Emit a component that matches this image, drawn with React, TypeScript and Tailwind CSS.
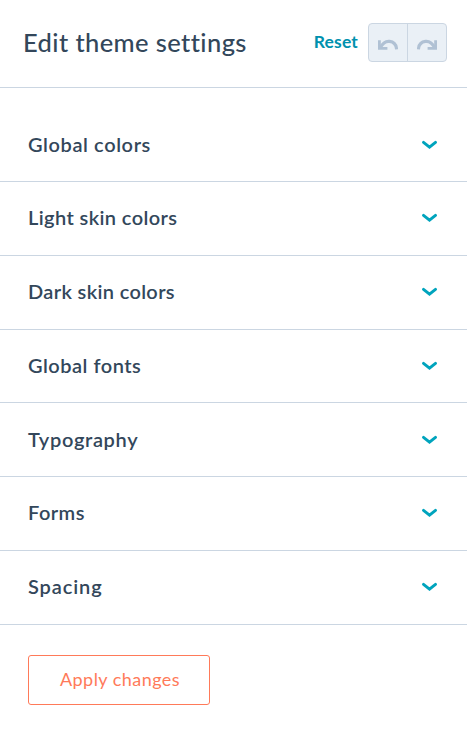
import React from 'react';

interface Section {
  title: string;
  tracking: string;
}

const sections: Section[] = [
  { title: 'Global colors', tracking: 'tracking-[0.6px]' },
  { title: 'Light skin colors', tracking: 'tracking-[0.4px]' },
  { title: 'Dark skin colors', tracking: 'tracking-[0.35px]' },
  { title: 'Global fonts', tracking: 'tracking-[0.5px]' },
  { title: 'Typography', tracking: 'tracking-[0.65px]' },
  { title: 'Forms', tracking: 'tracking-[0.45px]' },
  { title: 'Spacing', tracking: 'tracking-[0.9px]' },
];

function ChevronIcon() {
  return (
    <svg className="w-4 h-[10px]" viewBox="0 0 16 10" fill="none">
      <path d="M2.5 2.3L8.5 7.2L14.5 2.3" stroke="#00a4bd" strokeWidth="2.9" strokeLinecap="round" />
    </svg>
  );
}

function UndoIcon() {
  return (
    <svg className="w-5 h-3" viewBox="0 0 20 12" fill="none" stroke="#b0c1d4" strokeWidth="2.8">
      <path d="M1.4 1.2V9.4H9.4" />
      <path d="M2.2 9C4.5 4.2 8 2 11.6 2.4C15.6 2.8 18.2 5.6 18.6 10.3" strokeWidth="3.1" />
    </svg>
  );
}

function AccordionRow({ title, tracking }: Section) {
  return (
    <button className="flex w-full h-[73.75px] items-center justify-between border-b border-[#cbd6e2] pl-7 pr-[30px]">
      <span className={`pb-[2px] text-[20px] leading-6 font-semibold ${tracking}`}>{title}</span>
      <ChevronIcon />
    </button>
  );
}

export default function App() {
  return (
    <div className="min-h-[734px] w-full bg-white text-[#33475b] font-['Lato',sans-serif]">
      <header className="flex h-[88px] items-center border-b border-[#cbd6e2] pl-[23px] pr-5 pb-[2px]">
        <h1 className="flex-1 whitespace-nowrap pb-[2px] text-[25.5px] leading-8 font-medium tracking-[0.4px]">Edit theme settings</h1>
        <button className="mr-[10px] pb-[2px] text-[17.5px] leading-6 font-bold tracking-[0.15px] text-[#0091ae]">Reset</button>
        <div className="flex h-[39px] w-[79px] overflow-hidden rounded-[4px] border border-[#cbd6e2] bg-[#eaf0f6]">
          <button aria-label="Undo" className="flex w-[39px] items-center justify-center border-r border-[#cbd6e2] pt-1">
            <UndoIcon />
          </button>
          <button aria-label="Redo" className="flex flex-1 items-center justify-center pt-1">
            <span className="-scale-x-100">
              <UndoIcon />
            </span>
          </button>
        </div>
      </header>

      <main className="pt-[20.25px]">
        {sections.map((section) => (
          <AccordionRow key={section.title} {...section} />
        ))}
      </main>

      <div className="px-7 pt-[30.5px]">
        <button className="h-[50px] w-[182px] rounded-[3px] border border-[#ff7a59] pb-[2px] pl-[2px] text-[18px] text-[#ff7a59] tracking-[0.45px]">
          Apply changes
        </button>
      </div>
    </div>
  );
}
